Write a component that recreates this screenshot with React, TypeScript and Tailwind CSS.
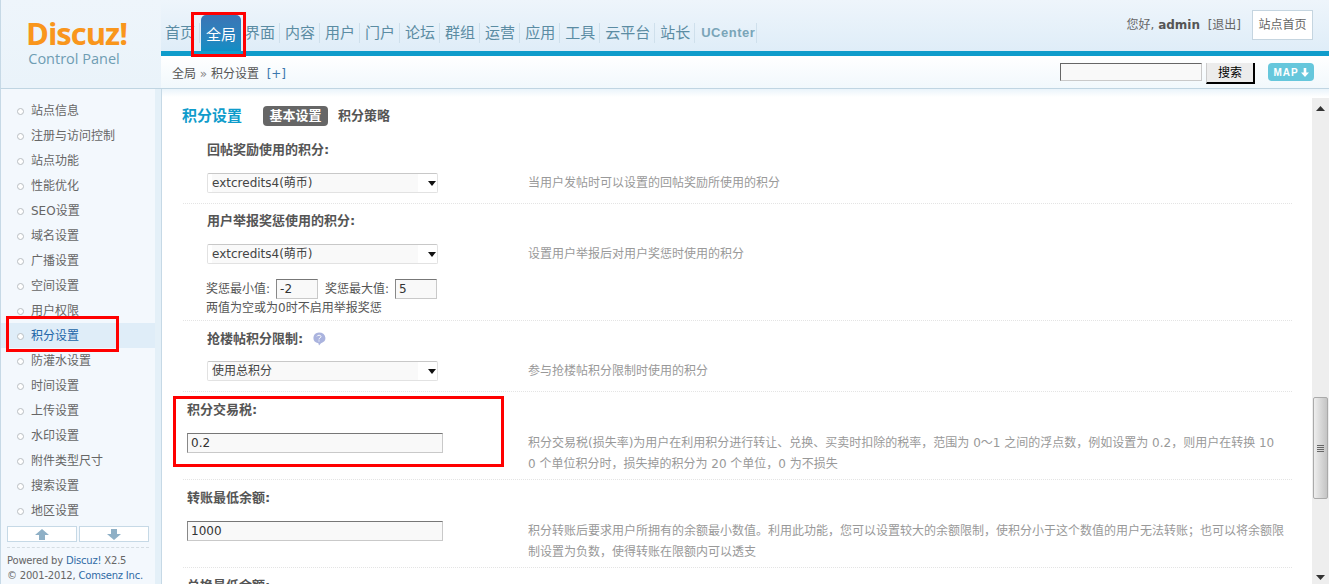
import React from "react";

const sideItems = ["站点信息","注册与访问控制","站点功能","性能优化","SEO设置","域名设置","广播设置","空间设置","用户权限","积分设置","防灌水设置","时间设置","上传设置","水印设置","附件类型尺寸","搜索设置","地区设置"];
const navItems = ["首页","全局","界面","内容","用户","门户","论坛","群组","运营","应用","工具","云平台","站长"];

function Heading({ children }: { children: React.ReactNode }) {
  return <div className="h-[24px] flex items-center text-[13px] font-bold text-[#555]">{children}</div>;
}

function Select({ value }: { value: string }) {
  return (
    <div className="w-[231px] h-[20px] -mt-[1px] flex items-center bg-white border border-[#e2e2e2] border-t-[#c8c8c8] rounded-[2px] pl-[4px]">
      <div className="w-[206px] h-[18px] bg-[#f9f9f9] text-[12px] leading-[18px] text-[#444]">{value}</div>
      <svg width="8" height="5" viewBox="0 0 8 5" className="ml-[10px]"><path d="M0 0h8L4 5z" fill="#111" /></svg>
    </div>
  );
}

function TextInput({ value, w = "w-[256px]" }: { value: string; w?: string }) {
  return (
    <div className={`${w} h-[20px] bg-[#f9f9f9] border border-[#c9c9c9] border-t-[#777] border-l-[#888] pl-[3px] text-[12px] leading-[18px] text-[#333]`}>{value}</div>
  );
}

function Desc({ children }: { children: React.ReactNode }) {
  return <div className="text-[12px] leading-[21px] text-[#999] whitespace-nowrap">{children}</div>;
}

export default function App() {
  return (
    <div className="relative w-[1329px] h-[584px] overflow-hidden flex flex-col bg-white text-[12px] text-[#666] font-['DejaVu_Sans','Noto_Sans_CJK_SC',sans-serif]">
      {/* header */}
      <div className="h-[89px] flex shrink-0 border-b border-[#c0d5e2] border-l border-l-[#c6d9e6]">
        <div className="w-[160px] bg-gradient-to-b from-[#eef5fb] to-[#eaf3fa] flex flex-col items-center pt-[18px] pr-[9px]">
          <div className="h-[30px] leading-[30px] text-[31px] font-bold tracking-[-1px] text-[#f9961c] font-['Open_Sans','Liberation_Sans',sans-serif]">Discuz!</div>
          <div className="mt-[2px] h-[18px] leading-[18px] text-[14.5px] text-[#6f9db3] font-['Open_Sans','Liberation_Sans',sans-serif] -ml-[5px]">Control Panel</div>
        </div>
        <div className="flex-1 flex flex-col">
          <div className="h-[51px] flex justify-between bg-gradient-to-b from-[#eef5fb] to-[#dfedf8]">
            <div className="flex items-end h-[51px] -ml-[1px]">
              {navItems.map((n) =>
                n === "全局" ? (
                  <div key={n} className="h-[36px] w-[40px] ml-[1px] -mr-[1px] rounded-t-[5px] bg-gradient-to-b from-[#3a75b5] to-[#0f8dc4] text-white text-[15px] leading-[40px] text-center">{n}</div>
                ) : (
                  <div key={n} className="h-[36px] flex items-center">
                    <span className="pl-[5px] pr-[4px] h-[20px] leading-[20px] text-[15px] text-[#5b8ca3] border-r border-[#cfe0ec]">{n}</span>
                  </div>
                )
              )}
              <div className="h-[36px] flex items-center">
                <span className="pl-[6px] pr-[1px] h-[20px] leading-[20px] text-[13px] tracking-[0.5px] font-bold text-[#7aa5b8] font-['Liberation_Sans',sans-serif] border-r border-[#cfe0ec]">UCenter</span>
              </div>
            </div>
            <div className="flex items-start pr-[16px] pt-[10px]">
              <span className="mt-[6px] text-[12px] text-[#666]">您好, <b className="text-[#555]">admin</b> &nbsp;[退出]</span>
              <div className="ml-[11px] w-[61px] h-[30px] bg-white border border-[#c5d5e0] text-center text-[12px] leading-[28px] text-[#666]">站点首页</div>
            </div>
          </div>
          <div className="h-[5px] bg-[#0f9ccb]" />
          <div className="flex-1 flex justify-between bg-gradient-to-b from-white to-[#f1f8fc] pl-[11px] pr-[15px] pt-[7px]">
            <div className="text-[12px] leading-[22px] text-[#555]">全局 <span className="text-[#888]">»</span> 积分设置 &nbsp;<span className="text-[#3b78ae]">[+]</span></div>
            <div className="flex items-start h-[22px]">
              <div className="w-[142px] h-[18px] bg-[#f9f9f9] border border-[#c9c9c9] border-t-[#666] border-l-[#666]" />
              <div className="ml-[4px] w-[49px] h-[21px] bg-[#ececec] border-r-2 border-b-2 border-black border-l border-l-[#ccc] text-center text-[12px] leading-[20px] text-black">搜索</div>
              <div className="ml-[13px] w-[46px] h-[18px] rounded-[4px] bg-[#66c7dc] flex items-center justify-center gap-[2px] text-white text-[10px] font-bold font-['Liberation_Sans',sans-serif] tracking-[1px]">
                MAP
                <svg width="8" height="9" viewBox="0 0 8 9"><path d="M2.7 0h2.6v4.5H8L4 9 0 4.5h2.7z" fill="#fff" /></svg>
              </div>
            </div>
          </div>
        </div>
      </div>

      {/* body */}
      <div className="flex-1 flex min-h-0">
        {/* sidebar */}
        <div className="w-[162px] shrink-0 flex border-l border-[#c6d9e6] border-r">
          <div className="w-[154px] bg-[#f3f8fd] flex flex-col">
            <div className="pt-[9px]">
              {sideItems.map((s) => (
                <div key={s} className={`h-[25px] pt-[1px] flex items-center pl-[16px] ${s === "积分设置" ? "bg-[#dfedf8]" : ""}`}>
                  <span className="w-[7px] h-[7px] rounded-full border border-[#b9bec2] bg-white" />
                  <span className={`ml-[7px] text-[12px] ${s === "积分设置" ? "text-[#2366a8]" : "text-[#666]"}`}>{s}</span>
                </div>
              ))}
            </div>
            <div className="flex gap-[2px] pl-[6px] mt-[3px]">
              {[0, 1].map((i) => (
                <div key={i} className="w-[70px] h-[16px] bg-white border border-[#c6d9e6] flex items-center justify-center">
                  <svg width="14" height="11" viewBox="0 0 14 11">
                    <path d={i === 0 ? "M7 0l7 6H10v5H4V6H0z" : "M4 0h6v5h4l-7 6-7-6h4z"} fill="#8fb0c6" />
                  </svg>
                </div>
              ))}
            </div>
            <div className="mx-[6px] mt-[5px] border-t border-dashed border-[#d5dde3]" />
            <div className="pl-[6px] pt-[5px] text-[10px] leading-[15px] tracking-[-0.2px] text-[#666] whitespace-nowrap">
              <div>Powered by <span className="text-[#2f6aa5]">Discuz!</span> X2.5</div>
              <div>© 2001-2012, <span className="text-[#2f6aa5]">Comsenz Inc.</span></div>
            </div>
          </div>
          <div className="w-[6px] bg-[#e4f0f8]" />
        </div>

        {/* main */}
        <div className="flex-1 flex flex-col min-w-0">
          <div className="h-[8px] shrink-0 bg-gradient-to-b from-[#eaf4fb] to-white" />
          <div className="flex-1 flex min-h-0">
            <div className="flex-1 overflow-hidden pl-[21px]">
              <div className="w-[1109px]">
                <div className="h-[41px] flex items-start pt-[9px]">
                  <span className="text-[15px] font-bold text-[#0f9ccb] -ml-[1px] leading-[20px]">积分设置</span>
                  <span className="ml-[21px] w-[65px] h-[20px] rounded-[4px] bg-[#666] text-white font-bold text-center text-[13px] leading-[20px]">基本设置</span>
                  <span className="ml-[10px] font-bold text-[13px] text-[#555] leading-[20px]">积分策略</span>
                </div>

                <div className="h-[66px] border-b border-dotted border-[#e4e4e4] pl-[24px]">
                  <Heading>回帖奖励使用的积分:</Heading>
                  <div className="mt-[11px] flex items-center">
                    <div className="w-[321px]"><Select value="extcredits4(萌币)" /></div>
                    <Desc>当用户发帖时可以设置的回帖奖励所使用的积分</Desc>
                  </div>
                </div>

                <div className="h-[117px] border-b border-dotted border-[#e4e4e4] pl-[24px] pt-[5px]">
                  <Heading>用户举报奖惩使用的积分:</Heading>
                  <div className="mt-[11px] flex items-center">
                    <div className="w-[321px]"><Select value="extcredits4(萌币)" /></div>
                    <Desc>设置用户举报后对用户奖惩时使用的积分</Desc>
                  </div>
                  <div className="mt-[14px] flex items-center h-[20px] text-[12px] text-[#555] -ml-[1px]">
                    奖惩最小值:
                    <div className="ml-[6px]"><TextInput value="-2" w="w-[42px]" /></div>
                    <span className="ml-[7px]">奖惩最大值:</span>
                    <div className="ml-[6px]"><TextInput value="5" w="w-[42px]" /></div>
                  </div>
                  <div className="h-[18px] leading-[18px] text-[12px] text-[#555] -ml-[1px]">两值为空或为0时不启用举报奖惩</div>
                </div>

                <div className="h-[71px] border-b border-dotted border-[#e4e4e4] pl-[24px] pt-[6px]">
                  <Heading>
                    抢楼帖积分限制:
                    <svg width="14" height="14" viewBox="0 0 14 14" className="ml-[9px]">
                      <path d="M7 0.5a6.5 5.5 0 0 1 2 10.7L7 13.5l-.6-2.2A6.5 5.5 0 0 1 7 .5z" fill="#aab3de" />
                      <path d="M5 4.4c.3-1.6 4-1.6 4 .2 0 1.3-2 1.2-2 2.8M7 8.4v1.1" stroke="#fff" strokeWidth="1" fill="none" />
                    </svg>
                  </Heading>
                  <div className="mt-[10px] flex items-center">
                    <div className="w-[321px]"><Select value="使用总积分" /></div>
                    <Desc>参与抢楼帖积分限制时使用的积分</Desc>
                  </div>
                </div>

                <div className="h-[88px] border-b border-dotted border-[#e4e4e4] pl-[4px] pt-[6px]">
                  <Heading>积分交易税:</Heading>
                  <div className="mt-[11px] flex items-start">
                    <div className="w-[341px]"><TextInput value="0.2" /></div>
                    <div>
                      <Desc>积分交易税(损失率)为用户在利用积分进行转让、兑换、买卖时扣除的税率，范围为 0～1 之间的浮点数，例如设置为 0.2，则用户在转换 10</Desc>
                      <Desc>0 个单位积分时，损失掉的积分为 20 个单位，0 为不损失</Desc>
                    </div>
                  </div>
                </div>

                <div className="h-[88px] border-b border-dotted border-[#e4e4e4] pl-[4px] pt-[6px]">
                  <Heading>转账最低余额:</Heading>
                  <div className="mt-[11px] flex items-start">
                    <div className="w-[341px]"><TextInput value="1000" /></div>
                    <div>
                      <Desc>积分转账后要求用户所拥有的余额最小数值。利用此功能，您可以设置较大的余额限制，使积分小于这个数值的用户无法转账；也可以将余额限</Desc>
                      <Desc>制设置为负数，使得转账在限额内可以透支</Desc>
                    </div>
                  </div>
                </div>

                <div className="pl-[4px] pt-[6px]">
                  <Heading>兑换最低余额:</Heading>
                </div>
              </div>
            </div>

            {/* scrollbar */}
            <div className="w-[17px] shrink-0 mt-[1px] bg-[#eeeeee] flex flex-col items-center">
              <svg width="9" height="5" viewBox="0 0 9 5" className="mt-[8px]"><path d="M4.5 0L9 5H0z" fill="#333" /></svg>
              <div className="mt-[286px] w-[15px] h-[102px] rounded-[2px] border border-[#aaa] bg-gradient-to-r from-[#eee] to-[#c4c4c4] flex flex-col items-center justify-center gap-[1px]">
                <span className="w-[7px] h-px bg-[#666]" />
                <span className="w-[7px] h-px bg-[#666]" />
                <span className="w-[7px] h-px bg-[#666]" />
                <span className="w-[7px] h-px bg-[#666]" />
              </div>
              <svg width="9" height="5" viewBox="0 0 9 5" className="mt-[76px]"><path d="M0 0h9L4.5 5z" fill="#333" /></svg>
            </div>
          </div>
        </div>
      </div>

      {/* annotation frames */}
      <div className="absolute left-[191px] top-[12px] w-[55px] h-[45px] border-[3px] border-[#f00]" />
      <div className="absolute left-[6px] top-[316px] w-[113px] h-[36px] border-[3px] border-[#f00]" />
      <div className="absolute left-[173px] top-[396px] w-[331px] h-[71px] border-[3px] border-[#f00]" />
    </div>
  );
}
